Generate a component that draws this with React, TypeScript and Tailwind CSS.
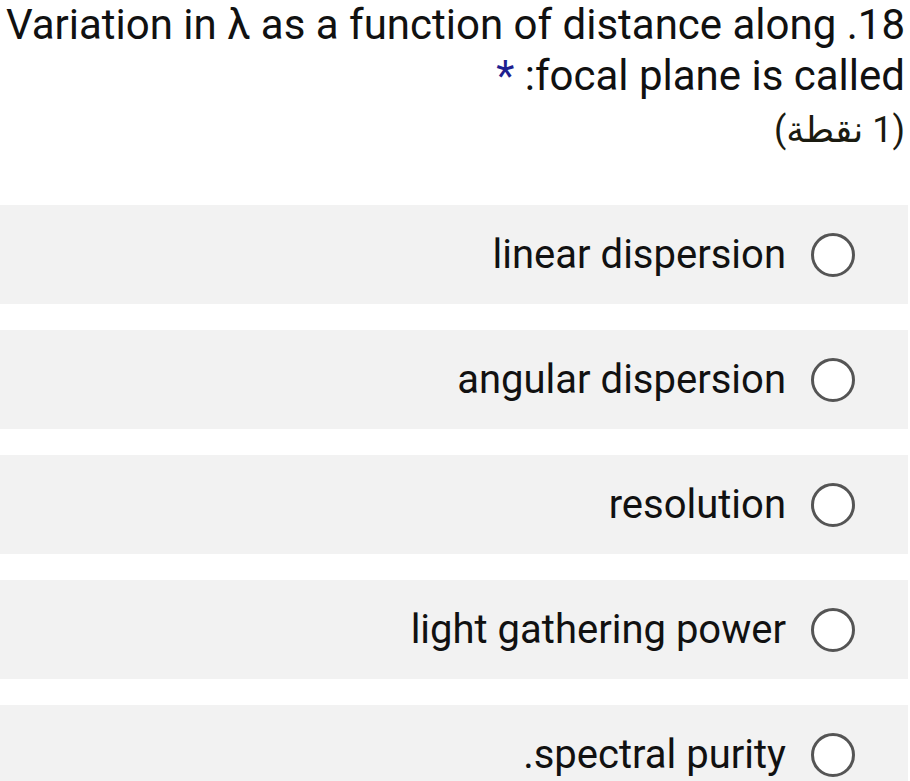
const OPTIONS = ['linear dispersion', 'angular dispersion', 'resolution', 'light gathering power', '.spectral purity'];

const Radio = () => (
  <span className="block h-[44px] w-[44px] shrink-0 rounded-full border-[3px] border-[#555555] bg-white" />
);

export default function App() {
  return (
    <div className="min-h-[781px] overflow-hidden bg-white font-['Roboto','Noto_Sans','DejaVu_Sans',sans-serif] text-[#111111]">
      {/* question header */}
      <div className="flex flex-col items-end pr-[5px]">
        <p className="whitespace-nowrap text-[42px] leading-[50px]">Variation in λ as a function of distance along .18</p>
        <p className="whitespace-nowrap text-[42px] leading-[52px]">
          <span className="text-[#1f1f8f]">*</span> :focal plane is called
        </p>
        <p dir="rtl" className="mt-[2px] whitespace-nowrap text-[36px] leading-[52px] text-[#1a1a10]">
          (1 نقطة)
        </p>
      </div>

      {/* options */}
      <div className="mt-[49px] flex flex-col gap-[26px] pr-[2px]">
        {OPTIONS.map((label) => (
          <div key={label} className="flex h-[99px] items-center justify-end gap-[25px] bg-[#f2f2f2] pr-[53px]">
            <span className="whitespace-nowrap text-[40px]">{label}</span>
            <Radio />
          </div>
        ))}
      </div>
    </div>
  );
}
